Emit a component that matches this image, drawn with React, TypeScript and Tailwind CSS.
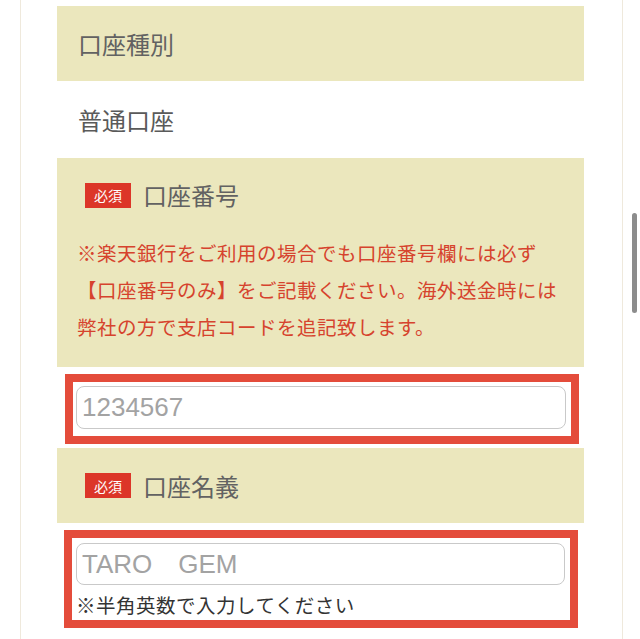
import React from "react";

const beige = "bg-[#ebe7bd]";

function Badge() {
  return (
    <span className="flex h-[25px] w-[46px] items-center justify-center bg-[#dc3628] text-[14px] leading-none text-white">
      必須
    </span>
  );
}

export default function App() {
  return (
    <div className="relative h-[639px] w-[640px] overflow-hidden bg-white font-['Noto_Sans_CJK_JP',sans-serif]">
      <div className="ml-[20px] h-full w-[603px] border-x border-[#efe9dc] pl-[36px] pr-[38px] pt-[6px]">
        {/* 口座種別 */}
        <div className={`flex h-[75px] items-center pl-[21px] text-[24px] text-[#626262] ${beige}`}>
          口座種別
        </div>
        <div className="flex h-[77px] items-center pl-[21px] text-[24px] text-[#5a5a5a]">
          普通口座
        </div>

        {/* 口座番号 */}
        <div className={`px-[20px] pb-[22px] pt-[19px] ${beige}`}>
          <div className="flex h-[36px] items-center">
            <span className="ml-[8px]">
              <Badge />
            </span>
            <span className="ml-[12px] text-[24px] text-[#626262]">口座番号</span>
          </div>
          <p className="mt-[21px] whitespace-nowrap text-[19.5px] leading-[37px] tracking-[0.5px] text-[#d6432d]">
            ※楽天銀行をご利用の場合でも口座番号欄には必ず
            <br />
            【口座番号のみ】をご記載ください。海外送金時には
            <br />
            弊社の方で支店コードを追記致します。
          </p>
        </div>

        <div className="ml-[8px] mr-[5px] mt-[7px] border-[8px] border-[#e44c3b] pb-[7px] pl-[3px] pr-[5px] pt-[4px]">
          <input
            readOnly
            placeholder="1234567"
            className="block h-[43px] w-full rounded-[8px] border border-[#c9c9c9] bg-white pl-[5px] font-['Liberation_Sans',sans-serif] text-[26px] outline-none placeholder:text-[#a3a3a3]"
          />
        </div>

        {/* 口座名義 */}
        <div className={`mt-[4px] flex h-[75px] items-center pl-[28px] ${beige}`}>
          <Badge />
          <span className="ml-[12px] text-[24px] text-[#626262]">口座名義</span>
        </div>

        <div className="ml-[7px] mr-[6px] mt-[7px] border-[8px] border-[#e44c3b] pl-[4px] pr-[5px] pt-[5px]">
          <input
            readOnly
            placeholder="TARO　GEM"
            className="block h-[42px] w-full rounded-[8px] border border-[#c9c9c9] bg-white pl-[5px] font-['Liberation_Sans','Noto_Sans_CJK_JP',sans-serif] text-[26px] outline-none placeholder:text-[#a3a3a3]"
          />
          <p className="mt-[5px] text-[19.5px] leading-[30px] tracking-[0.5px] text-[#333]">
            ※半角英数で入力してください
          </p>
        </div>
      </div>

      {/* scrollbar */}
      <div className="absolute left-[632px] top-[213px] h-[100px] w-[5px] rounded-full bg-[#8c8c8c]" />
    </div>
  );
}
